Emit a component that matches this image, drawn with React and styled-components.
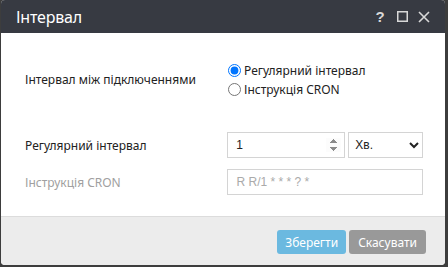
import React from "react";
import styled, { createGlobalStyle } from "styled-components";

const Global = createGlobalStyle`
  html, body { margin: 0; padding: 0; background: #3d3d3d; }
  body { width: 448px; height: 267px; overflow: hidden; font-family: "Noto Sans", "Open Sans", sans-serif; }
`;

const Dialog = styled.div`
  margin-left: 1px;
  width: 444px;
  height: 265px;
  border-radius: 4px;
  overflow: hidden;
  display: flex;
  flex-direction: column;
  background: #fff;
`;

const Header = styled.div`
  height: 33px;
  background: #373a42;
  display: flex;
  align-items: center;
  padding: 0 14px 0 15px;
  color: #fff;
`;

const Title = styled.div`
  flex: 1;
  font-size: 16px;
  letter-spacing: -0.2px;
`;

const Tools = styled.div`
  display: flex;
  align-items: center;
  gap: 8px;
  color: #d8d8d8;
`;

const ToolBtn = styled.span`
  display: flex;
  align-items: center;
  justify-content: center;
  width: 14px;
  height: 14px;
  font-size: 15px;
  font-weight: bold;
  font-family: "Liberation Sans", Arial, sans-serif;
`;

const Body = styled.div`
  flex: 1;
  padding: 28px 22px 0 24px;
  display: flex;
  flex-direction: column;
`;

const Row = styled.div`
  display: flex;
  align-items: center;
  margin-top: ${(p) => p.$mt || 0}px;
`;

const Label = styled.div`
  width: 203px;
  font-size: 12px;
  color: ${(p) => (p.$muted ? "#a0a0a0" : "#222")};
`;

const Radios = styled.div`
  display: flex;
  flex-direction: column;
  gap: 1px;
`;

const RadioLabel = styled.label`
  display: flex;
  align-items: center;
  font-size: 12px;
  color: #222;
  height: 18px;
  input {
    margin: 0 3px 0 0;
    width: 13px;
    height: 13px;
  }
`;

const NumberInput = styled.input`
  box-sizing: border-box;
  width: 118px;
  height: 26px;
  border: 1px solid #d4d4d4;
  padding: 0 3px 0 8px;
  font-size: 12px;
  font-family: "Liberation Sans", Arial, sans-serif;
  color: #222;
  outline: none;
  &::-webkit-inner-spin-button {
    opacity: 1;
  }
`;

const Select = styled.select`
  box-sizing: border-box;
  margin-left: 3px;
  width: 75px;
  height: 26px;
  border: 1px solid #d4d4d4;
  border-radius: 0;
  font-size: 12px;
  font-family: "Liberation Sans", Arial, sans-serif;
  color: #222;
  background: #fff;
  padding: 0 2px;
  outline: none;
`;

const TextInput = styled.input`
  box-sizing: border-box;
  width: 196px;
  height: 26px;
  border: 1px solid #d4d4d4;
  padding: 0 8px;
  font-size: 12px;
  font-family: "Liberation Sans", Arial, sans-serif;
  outline: none;
  &::placeholder { color: #aaa; }
`;

const Footer = styled.div`
  height: 49px;
  background: #ececec;
  border-top: 1px solid #dcdcdc;
  display: flex;
  justify-content: flex-end;
  align-items: flex-start;
  padding: 13px 19px 0 0;
  gap: 3px;
  box-sizing: border-box;
`;

const Button = styled.button`
  height: 24px;
  padding: 0 ${(p) => p.$px || 9}px;
  border: none;
  border-radius: 3px;
  color: #fff;
  font-size: 12px;
  font-family: "Noto Sans", "Open Sans", sans-serif;
  background: ${(p) => (p.$primary ? "#6bb9e0" : "#999999")};
`;

export default function App() {
  return (
    <>
      <Global />
      <Dialog>
        <Header>
          <Title>Інтервал</Title>
          <Tools>
            <ToolBtn>?</ToolBtn>
            <ToolBtn>
              <svg width="11" height="11" viewBox="0 0 11 11">
                <rect x="0.75" y="0.75" width="9.5" height="9.5" fill="none" stroke="#d8d8d8" strokeWidth="1.5" />
              </svg>
            </ToolBtn>
            <ToolBtn>
              <svg width="12" height="12" viewBox="0 0 12 12">
                <path d="M1 1L11 11M11 1L1 11" stroke="#d8d8d8" strokeWidth="1.6" />
              </svg>
            </ToolBtn>
          </Tools>
        </Header>
        <Body>
          <Row>
            <Label>Інтервал між підключеннями</Label>
            <Radios>
              <RadioLabel>
                <input type="radio" name="t" defaultChecked />
                Регулярний інтервал
              </RadioLabel>
              <RadioLabel>
                <input type="radio" name="t" />
                Інструкція CRON
              </RadioLabel>
            </Radios>
          </Row>
          <Row $mt={34}>
            <Label>Регулярний інтервал</Label>
            <NumberInput type="number" defaultValue={1} />
            <Select defaultValue="m">
              <option value="m">Хв.</option>
            </Select>
          </Row>
          <Row $mt={11}>
            <Label $muted>Інструкція CRON</Label>
            <TextInput placeholder="R R/1 * * * ? *" />
          </Row>
        </Body>
        <Footer>
          <Button $primary $px={8}>Зберегти</Button>
          <Button>Скасувати</Button>
        </Footer>
      </Dialog>
    </>
  );
}
